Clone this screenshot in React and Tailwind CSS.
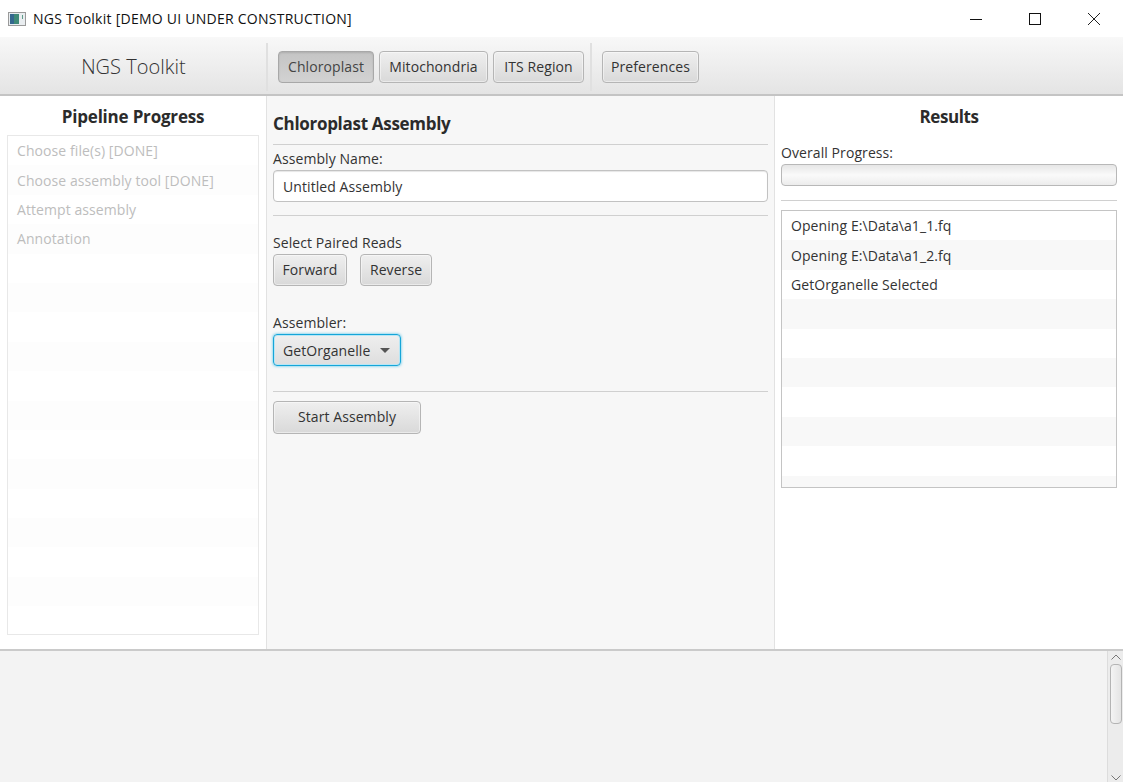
import { useMemo } from "react";

const FONT = "font-['Open_Sans','Noto_Sans',sans-serif]";
const btnBase =
  "flex h-8 items-center justify-center rounded-[4px] border border-[#b5b5b5] bg-gradient-to-b from-[#efefef] to-[#d9d9d9] text-[14px] tracking-[0.08px] text-[#333] shadow-[inset_0_0_0_1px_rgba(255,255,255,0.45)]";

const STEPS = ["Choose file(s) [DONE]", "Choose assembly tool [DONE]", "Attempt assembly", "Annotation"];
const LOG = ["Opening E:\\Data\\a1_1.fq", "Opening E:\\Data\\a1_2.fq", "GetOrganelle Selected"];

function Rule({ className = "" }) {
  return <div className={`h-px bg-[#d0d0d0] ${className}`} />;
}

function ToolButton({ label, width, active }) {
  if (active) {
    return (
      <div
        className={`flex h-8 items-center justify-center rounded-[4px] border border-[#a8a8a8] bg-gradient-to-b from-[#c4c4c4] to-[#d2d2d2] pb-[1px] text-[14px] tracking-[0.08px] text-[#444] shadow-[inset_0_1px_2px_rgba(0,0,0,0.12)] ${width}`}
      >
        {label}
      </div>
    );
  }
  return <div className={`${btnBase} pb-[1px] ${width}`}>{label}</div>;
}

function StripedList({ rows, count, className, textClass, evenClass }) {
  const items = useMemo(() => Array.from({ length: count }, (_, i) => rows[i] || ""), [rows, count]);
  return (
    <div className={`overflow-hidden ${className}`}>
      {items.map((row, i) => (
        <div
          key={i}
          className={`flex h-[29.4px] items-center px-[9px] text-[14px] tracking-[0.08px] ${textClass} ${i % 2 === 1 ? evenClass : "bg-white"}`}
        >
          {row}
        </div>
      ))}
    </div>
  );
}

export default function App() {
  return (
    <div className={`flex h-[782px] w-[1123px] flex-col overflow-hidden bg-white ${FONT}`}>
      {/* window title bar */}
      <div className="flex h-[37px] shrink-0 items-center bg-white">
        <svg width="18" height="14" viewBox="0 0 18 14" className="ml-[8px]">
          <rect x="0.5" y="0.5" width="17" height="13" fill="#e9edf0" stroke="#9a9a9a" />
          <rect x="2" y="2" width="9" height="10" fill="#3f8a78" />
          <rect x="2" y="2" width="4" height="10" fill="#35688f" />
          <rect x="14" y="3" width="1" height="4" fill="#5f9c8a" />
        </svg>
        <span className="mb-[1px] ml-[7px] text-[14px] tracking-[0.25px] text-[#111]">NGS Toolkit [DEMO UI UNDER CONSTRUCTION]</span>
        <div className="ml-auto flex items-center">
          <svg width="12" height="12" viewBox="0 0 12 12" className="mr-[47px]">
            <path d="M0 6.5H12" stroke="#111" strokeWidth="1" />
          </svg>
          <svg width="12" height="12" viewBox="0 0 12 12" className="mr-[47px]">
            <rect x="0.5" y="0.5" width="11" height="11" fill="none" stroke="#111" strokeWidth="1" />
          </svg>
          <svg width="12" height="12" viewBox="0 0 12 12" className="mr-[23px]">
            <path d="M0 0L12 12M12 0L0 12" stroke="#222" strokeWidth="1" />
          </svg>
        </div>
      </div>

      {/* toolbar */}
      <div className="flex h-[59px] shrink-0 items-center border-b-2 border-[#c4c4c4] bg-gradient-to-b from-[#f8f8f8] to-[#e4e4e4] pt-[3px]">
        <div className="w-[266px] pl-[1px] text-center text-[20px] font-light tracking-[0.03px] text-[#333]">NGS Toolkit</div>
        <div className="h-[48px] w-[2px] bg-[#e0e0e0]" />
        <div className="ml-[10px] flex gap-[5px]">
          <ToolButton label="Chloroplast" width="w-[96px]" active />
          <ToolButton label="Mitochondria" width="w-[109px]" />
          <ToolButton label="ITS Region" width="w-[91px]" />
        </div>
        <div className="ml-[6px] h-[48px] w-[2px] bg-[#e0e0e0]" />
        <div className="ml-[10px]">
          <ToolButton label="Preferences" width="w-[97px]" />
        </div>
      </div>

      {/* three panes */}
      <div className="flex h-[553px] shrink-0">
        <div className="flex w-[267px] shrink-0 flex-col border-r border-[#e2e2e2] bg-white px-[7px]">
          <div className="flex h-[39px] items-center justify-center pt-[2px] text-[17px] font-bold tracking-[-0.2px] text-[#2b2b2b]">Pipeline Progress</div>
          <StripedList
            rows={STEPS}
            count={17}
            className="h-[500px] border border-[#e8e8e8]"
            textClass="text-[#bdbdbd]"
            evenClass="bg-[#fdfdfd]"
          />
        </div>

        <div className="flex w-[508px] shrink-0 flex-col border-r border-[#e2e2e2] bg-[#f7f7f7] px-[6px]">
          <div className="mt-[15px] text-[17px] font-bold leading-[25px] tracking-[-0.3px] text-[#2b2b2b]">Chloroplast Assembly</div>
          <Rule className="mt-[8px]" />
          <div className="mt-[4px] text-[14px] leading-[19px] tracking-[0.08px] text-[#333]">Assembly Name:</div>
          <div className="mt-[2px] flex h-8 items-center rounded-[4px] border border-[#c2c2c2] bg-white px-[9px] text-[14px] tracking-[0.08px] text-[#333] shadow-[inset_0_1px_1px_rgba(0,0,0,0.1)]">
            Untitled Assembly
          </div>
          <Rule className="mt-[13px]" />
          <div className="mt-[16px] text-[14px] leading-[22px] tracking-[0.08px] text-[#333]">Select Paired Reads</div>
          <div className="flex gap-[13px]">
            <div className={`${btnBase} w-[74px] pb-[1px]`}>Forward</div>
            <div className={`${btnBase} w-[72px] pb-[1px]`}>Reverse</div>
          </div>
          <div className="mt-[27px] text-[14px] leading-[19px] tracking-[0.08px] text-[#333]">Assembler:</div>
          <div className="mt-[2px] flex h-8 w-[128px] items-center rounded-[4px] border border-[#16a5d8] bg-gradient-to-b from-[#efefef] to-[#dedede] pl-[9px] text-[14px] tracking-[0.08px] text-[#333] shadow-[0_0_3px_#3fbde6,inset_0_0_0_1px_#b8e6f5]">
            GetOrganelle
            <svg width="10" height="5" viewBox="0 0 10 5" className="ml-[10px]">
              <path d="M0 0H10L5 5Z" fill="#555" />
            </svg>
          </div>
          <Rule className="mt-[25px]" />
          <div className={`${btnBase} mt-[9px] h-[33px] w-[148px] pb-[2px]`}>Start Assembly</div>
        </div>

        <div className="flex min-w-0 flex-1 flex-col bg-white px-[6px]">
          <div className="flex h-[39px] items-center justify-center pt-[2px] text-[17px] font-bold tracking-[-0.4px] text-[#2b2b2b]">Results</div>
          <div className="mt-[8px] text-[14px] leading-[19px] tracking-[0.08px] text-[#333]">Overall Progress:</div>
          <div className="mt-[2px] h-[22px] rounded-[4px] border border-[#b8b8b8] bg-gradient-to-b from-[#e6e6e6] via-[#fafafa] to-[#ececec]" />
          <Rule className="mt-[14px]" />
          <StripedList
            rows={LOG}
            count={10}
            className="mt-[9px] h-[278px] border border-[#c4c4c4]"
            textClass="text-[#333]"
            evenClass="bg-[#f8f8f8]"
          />
        </div>
      </div>

      {/* console area with scrollbar */}
      <div className="flex min-h-0 flex-1 border-t-2 border-[#cacaca] bg-[#f3f3f3]">
        <div className="flex-1" />
        <div className="flex w-[16px] flex-col items-center border-l border-[#dcdcdc] bg-[#ececec]">
          <svg width="10" height="6" viewBox="0 0 10 6" className="mt-[3px]">
            <path d="M0.5 5.5L5 1L9.5 5.5" fill="none" stroke="#777" strokeWidth="1" />
          </svg>
          <div className="mt-[4px] h-[60px] w-[12px] rounded-[4px] border border-[#b4b4b4] bg-gradient-to-r from-[#f4f4f4] to-[#e4e4e4]" />
          <svg width="10" height="6" viewBox="0 0 10 6" className="mt-auto mb-[1px]">
            <path d="M0.5 0.5L5 5L9.5 0.5" fill="none" stroke="#777" strokeWidth="1" />
          </svg>
        </div>
      </div>
    </div>
  );
}
